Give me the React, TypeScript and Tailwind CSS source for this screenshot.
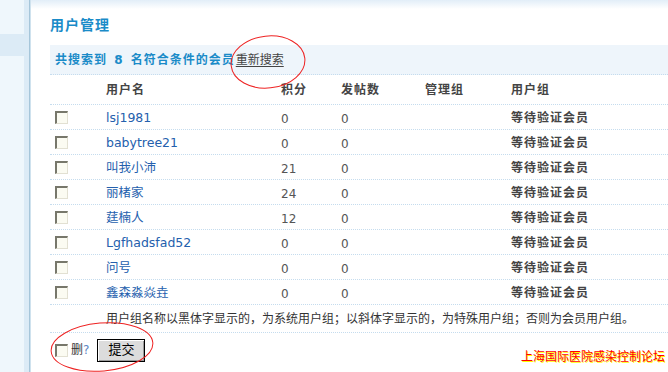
import React from "react";

type Member = { name: string; credits: number; posts: number };

const members: Member[] = [
  { name: "lsj1981", credits: 0, posts: 0 },
  { name: "babytree21", credits: 0, posts: 0 },
  { name: "叫我小沛", credits: 21, posts: 0 },
  { name: "丽楮家", credits: 24, posts: 0 },
  { name: "莛楠人", credits: 12, posts: 0 },
  { name: "Lgfhadsfad52", credits: 0, posts: 0 },
  { name: "问号", credits: 0, posts: 0 },
  { name: "鑫森淼焱垚", credits: 0, posts: 0 },
];

const cols = "grid grid-cols-[56px_175px_60px_84px_86px_1fr]";
const dotted = "border-b border-dotted border-[#c5dcee]";

function Box() {
  return (
    <span className="inline-block w-[13px] h-[13px] border-t-2 border-l-2 border-r border-b border-t-[#77776b] border-l-[#77776b] border-r-[#e2e0d2] border-b-[#e2e0d2] bg-[#fbfbf2]" />
  );
}

export default function App() {
  return (
    <div className="relative flex w-[668px] h-[372px] overflow-hidden bg-white text-[12px] text-[#333] font-['DejaVu_Sans','Noto_Sans_CJK_SC',sans-serif]">
      {/* sidebar */}
      <div className="flex shrink-0">
        <div className="w-[24px] flex flex-col bg-[#eff7fc]">
          <div className="h-[34px]" />
          <div className="h-[22px] bg-[#dcebf6]" />
        </div>
        <div className="w-[5px] bg-[#dcebf6]" />
        <div className="w-[1px] bg-[#a6c6da]" />
        <div className="w-[1px] bg-[#cfe2ee]" />
      </div>

      {/* main */}
      <div className="flex-1 flex flex-col pl-[19px] bg-[linear-gradient(to_bottom,#e2eef8,#ffffff_9px)]">
        <h1 className="mt-[15px] h-[30px] text-[14px] font-bold tracking-[1px] text-[#1a8bc8] leading-[20px]">
          用户管理
        </h1>

        <div className={`h-[30px] flex items-center pl-[5px] bg-[#eef5fb] ${dotted}`}>
          <span className="font-bold tracking-[1px] text-[#1a8bc8]">
            共搜索到 <span className="mx-[2px]">8</span> 名符合条件的会员
          </span>
          <a className="ml-[1px] text-[#444] underline underline-offset-2">重新搜索</a>
        </div>

        <div className={`${cols} h-[30px] items-center pt-[1px] font-bold tracking-[1px] text-[#444] ${dotted}`}>
          <span />
          <span>用户名</span>
          <span>积分</span>
          <span>发帖数</span>
          <span>管理组</span>
          <span>用户组</span>
        </div>

        {members.map((m) => (
          <div key={m.name} className={`${cols} h-[25px] items-center ${dotted}`}>
            <span className="pl-[5px] flex items-center pt-[1px]">
              <Box />
            </span>
            <a className="text-[12.5px] text-[#2460ad] pt-[2px]">{m.name}</a>
            <span className="text-[#555] pt-[4px]">{m.credits}</span>
            <span className="text-[#555] pt-[4px]">{m.posts}</span>
            <span />
            <span className="font-bold tracking-[1px] text-[#444] pt-[1px]">等待验证会员</span>
          </div>
        ))}

        <div className={`${cols} h-[28px] items-center ${dotted}`}>
          <span />
          <span className="col-span-5 pt-[1px] text-[#333]">
            用户组名称以黑体字显示的，为系统用户组；以斜体字显示的，为特殊用户组；否则为会员用户组。
          </span>
        </div>

        <div className="flex items-center h-[34px] pl-[5px]">
          <Box />
          <span className="ml-[3px]">删</span>
          <span className="text-[#5b86c4]">?</span>
          <button className="ml-[8px] w-[48px] h-[23px] text-[13px] text-black bg-[#dcdcdc] border border-black shadow-[inset_1px_1px_0_#ffffff,inset_-1px_-1px_0_#9a9a9a]">
            提交
          </button>
          <span className="ml-auto mr-[3px] mt-[14px] text-[12px] text-[#ff0000] [text-shadow:1px_1px_0_#ffff00]">
            上海国际医院感染控制论坛
          </span>
        </div>
      </div>

      {/* hand-drawn annotations */}
      <svg className="absolute inset-0 pointer-events-none" width="668" height="372">
        <ellipse cx="268" cy="62" rx="37" ry="26" transform="rotate(-6 268 62)" fill="none" stroke="#ee2222" strokeWidth="1" />
        <ellipse cx="102" cy="347" rx="51" ry="24" transform="rotate(-5 102 347)" fill="none" stroke="#ee2222" strokeWidth="1" />
      </svg>
    </div>
  );
}
